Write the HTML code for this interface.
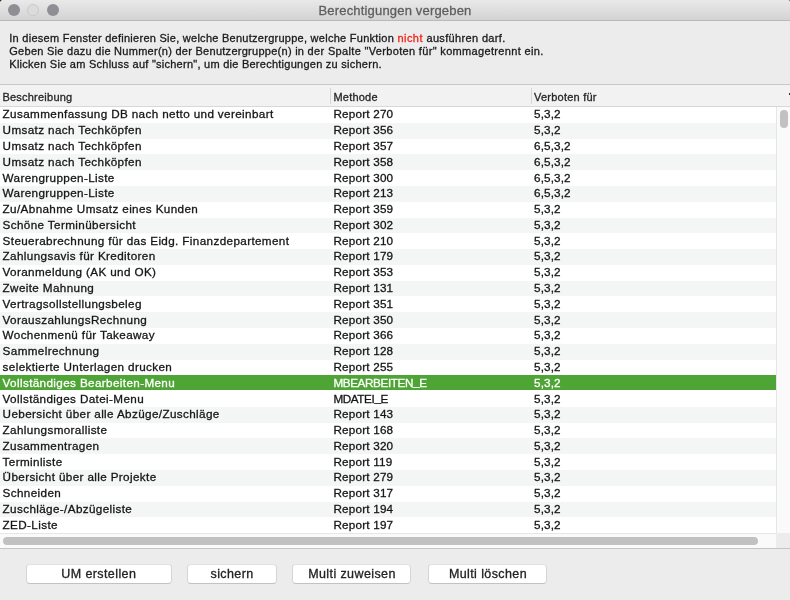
<!DOCTYPE html>
<html lang="de"><head><meta charset="utf-8"><title>Berechtigungen vergeben</title>
<style>
*{margin:0;padding:0;box-sizing:border-box}
html,body{width:790px;height:600px;overflow:hidden;background:#ececec}
body{position:relative;font-family:"Liberation Sans",sans-serif;color:#1d1d1d}
.abs{position:absolute}
#tb{left:0;top:0;width:790px;height:21px;background:linear-gradient(#e9e9e9,#d3d3d3);border-bottom:1px solid #b9b9b9}
#corner{left:0;top:0;width:3px;height:3px;background:radial-gradient(circle at 3px 3px,rgba(0,0,0,0) 2.6px,#222 3.6px)}
#corner2{left:787px;top:0;width:3px;height:3px;background:radial-gradient(circle at 0 3px,rgba(0,0,0,0) 2.8px,#777 3.8px)}
.tl{position:absolute;top:4px;width:12px;height:12px;border-radius:50%}
#txt{left:0;top:0;width:790px;height:600px;will-change:transform;-webkit-text-stroke:.3px}
#title{left:0;top:3px;width:790px;text-align:center;font-size:13px;line-height:15px;color:#5e5e5e;letter-spacing:.18px}
.info{position:absolute;left:9.3px;font-size:11px;line-height:13px;letter-spacing:.29px;white-space:nowrap;color:#1a1a1a}
.info b{font-weight:normal;color:#f0231a}
#hdr{left:0;top:84px;width:790px;height:23px;background:#f2f2f2;border-top:1px solid #c8c8c8;border-bottom:1px solid #d8d8d8}
#dot{left:789px;top:93px;width:1px;height:2px;background:#333}
.h{position:absolute;top:90px;transform:translateY(.5px);font-size:11px;line-height:13px;letter-spacing:.23px;color:#262626;white-space:nowrap}
.sep{position:absolute;top:88px;width:1px;height:16px;background:#d6d6d6}
#list{left:0;top:107px;width:776px;height:426px;background:#fff}
.bg{position:absolute;left:0;width:776px;background:#f4f5f5}
.bg.sel{background:#4ea435}
.r{position:absolute;left:0;width:776px;height:16px;font-size:11.7px;line-height:16px;letter-spacing:.37px;white-space:nowrap;color:#151515}
.r.sel{color:#fff}
.r span{position:absolute;top:0}
.r i{font-style:normal;position:relative;top:-1.5px}
.c1{left:2.6px} .c2{left:333.4px;letter-spacing:.21px} .c3{left:534px;letter-spacing:.13px}
#vs{left:776px;top:107px;width:14px;height:426px;background:#fafafa;border-left:1px solid #e6e6e6}
#vth{left:780px;top:110px;width:8px;height:18px;border-radius:4px;background:#c1c1c1}
#hs{left:0;top:533px;width:776px;height:15px;background:#fafafa;border-top:1px solid #e6e6e6}
#hth{left:3px;top:537px;width:755px;height:7.5px;border-radius:4px;background:#c1c1c1}
#cor2{left:776px;top:533px;width:14px;height:15px;background:#ececec}
#bl{left:0;top:548px;width:790px;height:1px;background:#c4c4c4}
.btn{position:absolute;top:564.3px;height:20.1px;background:#fff;border-radius:4px;border:1px solid #d5d5d5;border-top-color:#e0e0e0;border-bottom-color:#c2c2c2}
.bt{position:absolute;top:565px;height:19px;font-size:12.5px;line-height:19px;letter-spacing:.4px;text-indent:.4px;text-align:center;color:#222;white-space:nowrap}
</style></head><body>
<div id="tb" class="abs"></div>
<div id="corner" class="abs"></div>
<div id="corner2" class="abs"></div>
<div class="tl" style="left:7.6px;background:#8f8e94"></div>
<div class="tl" style="left:27.2px;background:#dcdcdc;border:1px solid #c9c9c9"></div>
<div class="tl" style="left:47px;background:#8f8e94"></div>
<div id="hdr" class="abs"></div>
<div id="dot" class="abs"></div>
<div class="sep" style="left:330px"></div>
<div class="sep" style="left:531px"></div>
<div id="list" class="abs"></div>
<div class="bg" style="top:122.83px;height:15.78px"></div>
<div class="bg" style="top:154.39px;height:15.78px"></div>
<div class="bg" style="top:185.95px;height:15.78px"></div>
<div class="bg" style="top:217.51px;height:15.78px"></div>
<div class="bg" style="top:249.07px;height:15.78px"></div>
<div class="bg" style="top:280.63px;height:15.78px"></div>
<div class="bg" style="top:312.19px;height:15.78px"></div>
<div class="bg" style="top:343.75px;height:15.78px"></div>
<div class="bg sel" style="top:375.31px;height:14.5px"></div>
<div class="bg" style="top:406.87px;height:15.78px"></div>
<div class="bg" style="top:438.43px;height:15.78px"></div>
<div class="bg" style="top:469.99px;height:15.78px"></div>
<div class="bg" style="top:501.55px;height:15.78px"></div>
<div id="vs" class="abs"></div>
<div id="vth" class="abs"></div>
<div id="hs" class="abs"></div>
<div id="hth" class="abs"></div>
<div id="cor2" class="abs"></div>
<div id="bl" class="abs"></div>
<div class="btn" style="left:26.3px;width:145.7px"></div>
<div class="btn" style="left:187.3px;width:89.4px"></div>
<div class="btn" style="left:292.3px;width:118.4px"></div>
<div class="btn" style="left:428.3px;width:118.4px"></div>
<div id="txt" class="abs">
<div id="title" class="abs">Berechtigungen vergeben</div>
<div class="info" style="top:32px"><span style="letter-spacing:.266px">In diesem Fenster definieren Sie, welche Benutzergruppe, welche Funktion </span><b style="letter-spacing:.45px">nicht </b><span style="letter-spacing:.35px">ausführen darf.</span></div>
<div class="info" style="top:45px"><span style="letter-spacing:.27px">Geben Sie dazu die Nummer(n) der Benutzergruppe(n) in </span><span style="letter-spacing:.336px">der Spalte "Verboten für" kommagetrennt ein.</span></div>
<div class="info" style="top:58px;letter-spacing:.254px">Klicken Sie am Schluss auf "sichern", um die Berechtigungen zu sichern.</div>
<div class="h" style="left:2.4px">Beschreibung</div>
<div class="h" style="left:333.4px">Methode</div>
<div class="h" style="left:534px">Verboten für</div>
<div class="r" style="top:106px"><span class="c1">Zusammenfassung DB nach netto und vereinbart</span><span class="c2">Report 270</span><span class="c3">5,3,2</span></div>
<div class="r alt" style="top:122px"><span class="c1">Umsatz nach Techköpfen</span><span class="c2">Report 356</span><span class="c3">5,3,2</span></div>
<div class="r" style="top:138px"><span class="c1">Umsatz nach Techköpfen</span><span class="c2">Report 357</span><span class="c3">6,5,3,2</span></div>
<div class="r alt" style="top:154px"><span class="c1">Umsatz nach Techköpfen</span><span class="c2">Report 358</span><span class="c3">6,5,3,2</span></div>
<div class="r" style="top:170px"><span class="c1">Warengruppen-Liste</span><span class="c2">Report 300</span><span class="c3">6,5,3,2</span></div>
<div class="r alt" style="top:185px"><span class="c1">Warengruppen-Liste</span><span class="c2">Report 213</span><span class="c3">6,5,3,2</span></div>
<div class="r" style="top:201px"><span class="c1">Zu/Abnahme Umsatz eines Kunden</span><span class="c2">Report 359</span><span class="c3">5,3,2</span></div>
<div class="r alt" style="top:217px"><span class="c1">Schöne Terminübersicht</span><span class="c2">Report 302</span><span class="c3">5,3,2</span></div>
<div class="r" style="top:233px"><span class="c1">Steuerabrechnung für das Eidg. Finanzdepartement</span><span class="c2">Report 210</span><span class="c3">5,3,2</span></div>
<div class="r alt" style="top:248px"><span class="c1">Zahlungsavis für Kreditoren</span><span class="c2">Report 179</span><span class="c3">5,3,2</span></div>
<div class="r" style="top:264px"><span class="c1">Voranmeldung (AK und OK)</span><span class="c2">Report 353</span><span class="c3">5,3,2</span></div>
<div class="r alt" style="top:280px"><span class="c1">Zweite Mahnung</span><span class="c2">Report 131</span><span class="c3">5,3,2</span></div>
<div class="r" style="top:296px"><span class="c1">Vertragsollstellungsbeleg</span><span class="c2">Report 351</span><span class="c3">5,3,2</span></div>
<div class="r alt" style="top:312px"><span class="c1">VorauszahlungsRechnung</span><span class="c2">Report 350</span><span class="c3">5,3,2</span></div>
<div class="r" style="top:327px"><span class="c1">Wochenmenü für Takeaway</span><span class="c2">Report 366</span><span class="c3">5,3,2</span></div>
<div class="r alt" style="top:343px"><span class="c1">Sammelrechnung</span><span class="c2">Report 128</span><span class="c3">5,3,2</span></div>
<div class="r" style="top:359px"><span class="c1">selektierte Unterlagen drucken</span><span class="c2">Report 255</span><span class="c3">5,3,2</span></div>
<div class="r sel" style="top:375px"><span class="c1">Vollständiges Bearbeiten-Menu</span><span class="c2" style="letter-spacing:-.38px">MBEARBEITEN<i>_</i>E</span><span class="c3">5,3,2</span></div>
<div class="r" style="top:391px"><span class="c1">Vollständiges Datei-Menu</span><span class="c2" style="letter-spacing:-.38px">MDATEI<i>_</i>E</span><span class="c3">5,3,2</span></div>
<div class="r alt" style="top:406px"><span class="c1">Uebersicht über alle Abzüge/Zuschläge</span><span class="c2">Report 143</span><span class="c3">5,3,2</span></div>
<div class="r" style="top:422px"><span class="c1">Zahlungsmoralliste</span><span class="c2">Report 168</span><span class="c3">5,3,2</span></div>
<div class="r alt" style="top:438px"><span class="c1">Zusammentragen</span><span class="c2">Report 320</span><span class="c3">5,3,2</span></div>
<div class="r" style="top:454px"><span class="c1">Terminliste</span><span class="c2">Report 119</span><span class="c3">5,3,2</span></div>
<div class="r alt" style="top:469px"><span class="c1">Übersicht über alle Projekte</span><span class="c2">Report 279</span><span class="c3">5,3,2</span></div>
<div class="r" style="top:485px"><span class="c1">Schneiden</span><span class="c2">Report 317</span><span class="c3">5,3,2</span></div>
<div class="r alt" style="top:501px"><span class="c1">Zuschläge-/Abzügeliste</span><span class="c2">Report 194</span><span class="c3">5,3,2</span></div>
<div class="r" style="top:517px"><span class="c1">ZED-Liste</span><span class="c2">Report 197</span><span class="c3">5,3,2</span></div>
<div class="bt" style="left:26.3px;width:144.6px">UM erstellen</div>
<div class="bt" style="left:187.3px;width:89.2px">sichern</div>
<div class="bt" style="left:292.3px;width:119px">Multi zuweisen</div>
<div class="bt" style="left:428.3px;width:119px">Multi löschen</div>
</div>
</body></html>
